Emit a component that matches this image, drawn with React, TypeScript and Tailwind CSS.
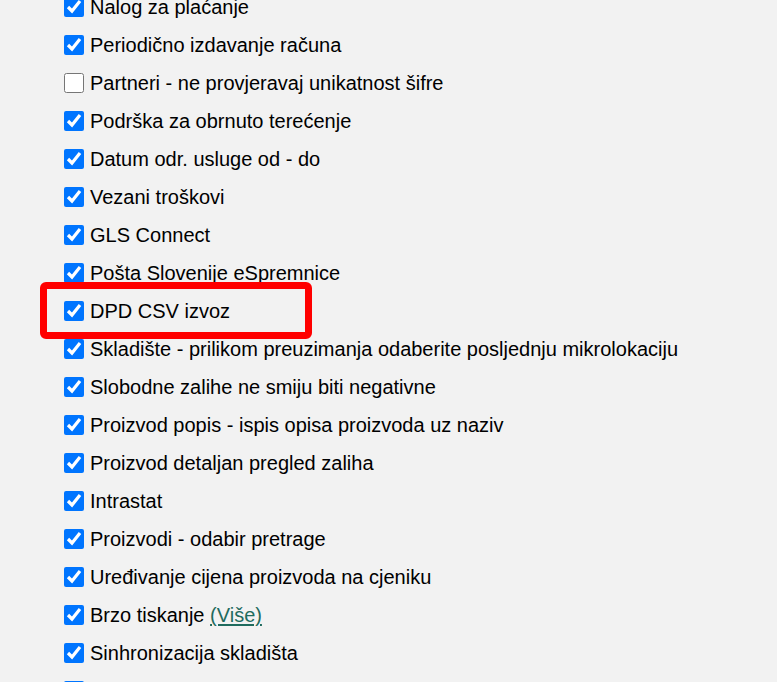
const items: { label: string; checked: boolean; link?: string; mark?: boolean }[] = [
  { label: "Nalog za plaćanje", checked: true },
  { label: "Periodično izdavanje računa", checked: true },
  { label: "Partneri - ne provjeravaj unikatnost šifre", checked: false },
  { label: "Podrška za obrnuto terećenje", checked: true },
  { label: "Datum odr. usluge od - do", checked: true },
  { label: "Vezani troškovi", checked: true },
  { label: "GLS Connect", checked: true },
  { label: "Pošta Slovenije eSpremnice", checked: true },
  { label: "DPD CSV izvoz", checked: true, mark: true },
  { label: "Skladište - prilikom preuzimanja odaberite posljednju mikrolokaciju", checked: true },
  { label: "Slobodne zalihe ne smiju biti negativne", checked: true },
  { label: "Proizvod popis - ispis opisa proizvoda uz naziv", checked: true },
  { label: "Proizvod detaljan pregled zaliha", checked: true },
  { label: "Intrastat", checked: true },
  { label: "Proizvodi - odabir pretrage", checked: true },
  { label: "Uređivanje cijena proizvoda na cjeniku", checked: true },
  { label: "Brzo tiskanje", checked: true, link: "(Više)" },
  { label: "Sinhronizacija skladišta", checked: true },
  { label: "", checked: true },
];

export default function App() {
  return (
    <div className="h-[682px] w-[777px] overflow-hidden bg-[#f2f2f2] font-['Liberation_Sans',Arial,sans-serif] text-[20px] text-black">
      <div className="mt-[-12px] flex flex-col pl-[64px]">
        {items.map((it, i) => (
          <label key={i} className="relative flex h-[38px] items-center">
            {it.mark && (
              <span className="pointer-events-none absolute left-[-24px] top-[-10px] h-[57px] w-[272px] rounded-[6px] border-[7px] border-[#ff0000]" />
            )}
            <input
              type="checkbox"
              defaultChecked={it.checked}
              className="m-0 h-5 w-5 shrink-0"
            />
            <span className="ml-[6px] whitespace-nowrap">
              {it.label}
              {it.link && (
                <>
                  {" "}
                  <a href="#" className="text-[#1f6b5e] underline underline-offset-2">
                    {it.link}
                  </a>
                </>
              )}
            </span>
          </label>
        ))}
      </div>
    </div>
  );
}
